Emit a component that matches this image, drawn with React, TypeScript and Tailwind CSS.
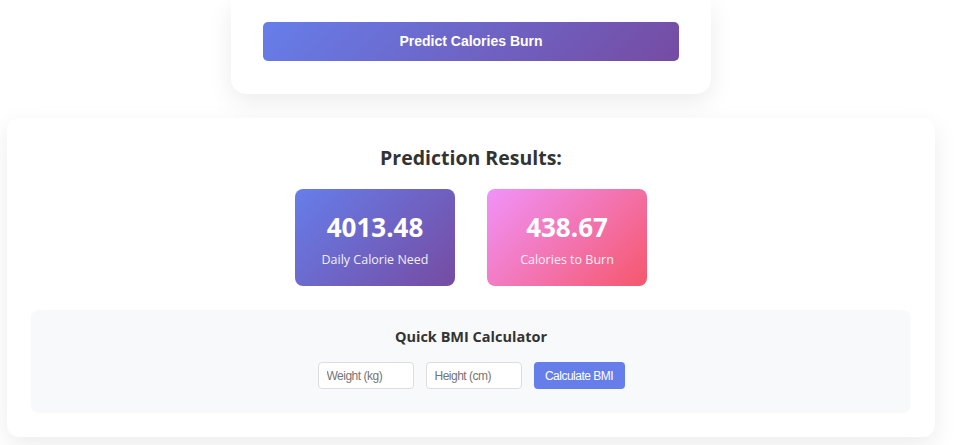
import React, { useState } from 'react';

const heading = "font-['Segoe_UI','Open_Sans','Noto_Sans',sans-serif]";
const arial = "font-['Liberation_Sans',Arial,sans-serif]";

function ResultCard({ value, label, gradient }: { value: string; label: string; gradient: string }) {
  return (
    <div className={`w-[160px] h-[97px] rounded-lg pt-[20px] text-center text-white ${gradient}`}>
      <div className="text-[26px] leading-[36px] font-bold">{value}</div>
      <div className="mt-[5px] text-[12.5px] leading-[20px] opacity-90">{label}</div>
    </div>
  );
}

export default function App() {
  const [weight, setWeight] = useState('');
  const [height, setHeight] = useState('');

  return (
    <div className={`min-h-[445px] w-full bg-white ${heading}`}>
      <div className="ml-[231px] w-[480px] rounded-b-[15px] bg-white px-8 pt-[22px] pb-[33px] shadow-[0_8px_25px_rgba(0,0,0,0.08)]">
        <button
          type="button"
          className={`h-[39px] w-full rounded-[5px] bg-[linear-gradient(135deg,#667eea_0%,#764ba2_100%)] text-[14px] font-bold text-white ${arial}`}
        >
          Predict Calories Burn
        </button>
      </div>

      <div className="ml-[7px] mt-6 w-[928px] rounded-[12px] bg-white px-6 pt-6 pb-6 shadow-[0_8px_25px_rgba(0,0,0,0.08)]">
        <h3 className="text-center text-[19.5px] leading-[31px] font-bold text-[#333]">Prediction Results:</h3>

        <div className="mt-[16px] flex justify-center gap-8">
          <ResultCard value="4013.48" label="Daily Calorie Need" gradient="bg-[linear-gradient(135deg,#667eea_0%,#764ba2_100%)]" />
          <ResultCard value="438.67" label="Calories to Burn" gradient="bg-[linear-gradient(135deg,#f093fb_0%,#f5576c_100%)]" />
        </div>

        <div className="mt-6 rounded-lg bg-[#f8f9fa] pt-[16px] pb-6">
          <h4 className="text-center text-[14.5px] leading-[22px] font-bold text-[#333]">Quick BMI Calculator</h4>
          <div className={`mt-[14px] flex justify-center gap-3 ${arial}`}>
            <input
              type="number"
              value={weight}
              onChange={(e) => setWeight(e.target.value)}
              placeholder="Weight (kg)"
              className="h-[27px] w-[96px] rounded border border-[#ddd] bg-white px-2 text-[12px] tracking-[-0.5px] placeholder:text-[#757575] focus:outline-none"
            />
            <input
              type="number"
              value={height}
              onChange={(e) => setHeight(e.target.value)}
              placeholder="Height (cm)"
              className="h-[27px] w-[96px] rounded border border-[#ddd] bg-white px-2 text-[12px] tracking-[-0.5px] placeholder:text-[#757575] focus:outline-none"
            />
            <button type="button" className="h-[27px] w-[91px] rounded bg-[#667eea] text-[12px] tracking-[-0.5px] text-white">
              Calculate BMI
            </button>
          </div>
        </div>
      </div>
    </div>
  );
}
